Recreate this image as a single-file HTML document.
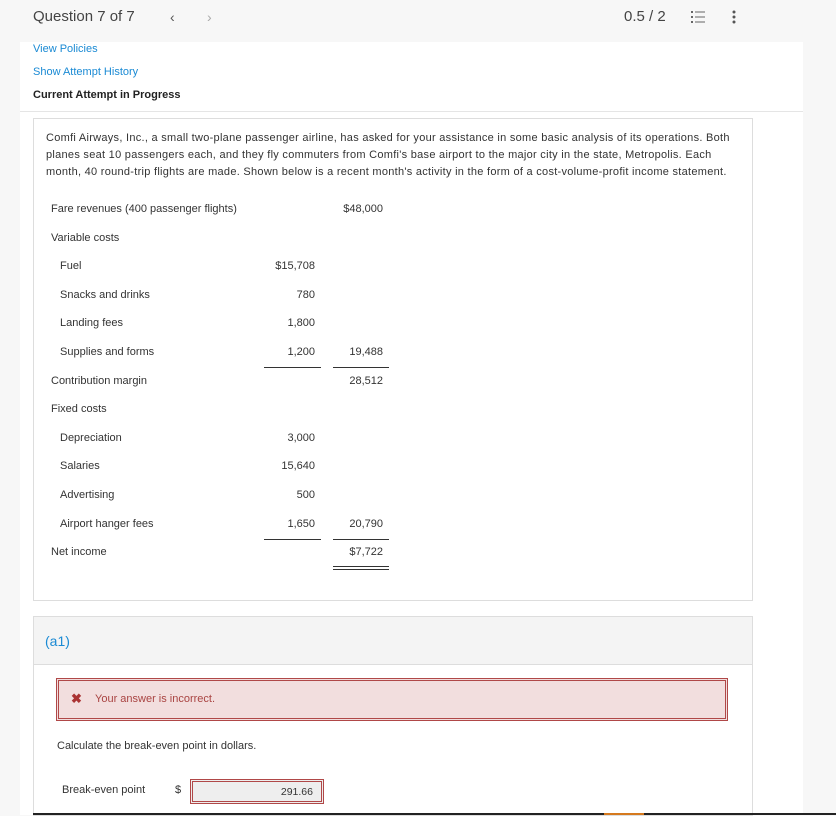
<!DOCTYPE html>
<html><head><meta charset="utf-8"><style>
*{margin:0;padding:0;box-sizing:border-box}
body{width:836px;height:815px;background:#f7f7f7;font-family:"Liberation Sans",sans-serif;color:#333;position:relative;overflow:hidden;font-size:11px}
.a{position:absolute;white-space:nowrap}
.r{text-align:right}
.col{position:absolute;left:20px;top:42px;width:783px;height:773px;background:#fff}
.hl{position:absolute;height:1px;background:#333}
</style></head><body>
<div class="a" style="left:33px;top:8px;font-size:15px;color:#444">Question 7 of 7</div>
<div class="a" style="left:170px;top:9px;font-size:14px;color:#555">&lsaquo;</div>
<div class="a" style="left:207px;top:9px;font-size:14px;color:#aaa">&rsaquo;</div>
<div class="a" style="left:624px;top:8px;font-size:15px;color:#444">0.5 / 2</div>
<svg class="a" style="left:691px;top:11px" width="14" height="12" viewBox="0 0 14 12"><g fill="#666"><rect x="0" y="0" width="2" height="2"/><rect x="0" y="5" width="2" height="2"/><rect x="0" y="10" width="2" height="2"/><rect x="4" y="0.5" width="10" height="1"/><rect x="4" y="5.5" width="10" height="1"/><rect x="4" y="10.5" width="10" height="1"/></g></svg>
<svg class="a" style="left:732px;top:10px" width="4" height="14"><circle cx="2" cy="2" r="1.5" fill="#555"/><circle cx="2" cy="7" r="1.5" fill="#555"/><circle cx="2" cy="12" r="1.5" fill="#555"/></svg>
<div class="col"></div>
<div class="a" style="left:33px;top:43px;color:#1a8ad4">View Policies</div>
<div class="a" style="left:33px;top:66px;color:#1a8ad4">Show Attempt History</div>
<div class="a" style="left:33px;top:89px;color:#222;font-weight:bold;font-size:11px">Current Attempt in Progress</div>
<div class="a" style="left:20px;top:111px;width:783px;height:1px;background:#e5e5e5"></div>
<div class="a" style="left:33px;top:118px;width:720px;height:483px;border:1px solid #ddd;background:#fff"></div>
<div class="a" style="left:46px;top:130px;font-size:11px;line-height:17px;color:#333;letter-spacing:0.28px">Comfi Airways, Inc., a small two-plane passenger airline, has asked for your assistance in some basic analysis of its operations. Both<br>planes seat 10 passengers each, and they fly commuters from Comfi's base airport to the major city in the state, Metropolis. Each<br>month, 40 round-trip flights are made. Shown below is a recent month's activity in the form of a cost-volume-profit income statement.</div>
<div style="font-size:11px">
<div class="a" style="left:51px;top:203px">Fare revenues (400 passenger flights)</div><div class="a r" style="left:320px;width:63px;top:203px">$48,000</div>
<div class="a" style="left:51px;top:232px">Variable costs</div>
<div class="a" style="left:60px;top:260px">Fuel</div><div class="a r" style="left:250px;width:65px;top:260px">$15,708</div>
<div class="a" style="left:60px;top:289px">Snacks and drinks</div><div class="a r" style="left:250px;width:65px;top:289px">780</div>
<div class="a" style="left:60px;top:317px">Landing fees</div><div class="a r" style="left:250px;width:65px;top:317px">1,800</div>
<div class="a" style="left:60px;top:346px">Supplies and forms</div><div class="a r" style="left:250px;width:65px;top:346px">1,200</div><div class="a r" style="left:320px;width:63px;top:346px">19,488</div>
<div class="a" style="left:51px;top:375px">Contribution margin</div><div class="a r" style="left:320px;width:63px;top:375px">28,512</div>
<div class="a" style="left:51px;top:403px">Fixed costs</div>
<div class="a" style="left:60px;top:432px">Depreciation</div><div class="a r" style="left:250px;width:65px;top:432px">3,000</div>
<div class="a" style="left:60px;top:460px">Salaries</div><div class="a r" style="left:250px;width:65px;top:460px">15,640</div>
<div class="a" style="left:60px;top:489px">Advertising</div><div class="a r" style="left:250px;width:65px;top:489px">500</div>
<div class="a" style="left:60px;top:518px">Airport hanger fees</div><div class="a r" style="left:250px;width:65px;top:518px">1,650</div><div class="a r" style="left:320px;width:63px;top:518px">20,790</div>
<div class="a" style="left:51px;top:546px">Net income</div><div class="a r" style="left:320px;width:63px;top:546px">$7,722</div>
</div>
<div class="hl" style="left:264px;top:367px;width:57px"></div><div class="hl" style="left:333px;top:367px;width:56px"></div>
<div class="hl" style="left:264px;top:539px;width:57px"></div><div class="hl" style="left:333px;top:539px;width:56px"></div>
<div class="hl" style="left:333px;top:566px;width:56px"></div><div class="hl" style="left:333px;top:569px;width:56px"></div>
<div class="a" style="left:33px;top:616px;width:720px;height:200px;border:1px solid #ddd;background:#fff"></div>
<div class="a" style="left:34px;top:617px;width:718px;height:48px;background:#f4f4f4;border-bottom:1px solid #ddd"></div>
<div class="a" style="left:45px;top:633px;font-size:14px;color:#1a8ad4">(a1)</div>
<div class="a" style="left:56px;top:678px;width:672px;height:43px;border:1px solid #b04848;background:#f2dede"><div style="position:absolute;inset:1px;border:1px solid #b04848"></div></div>
<div class="a" style="left:71px;top:691px;font-size:13px;color:#a33;font-weight:bold">&#10006;</div>
<div class="a" style="left:95px;top:693px;font-size:11px;color:#a94442">Your answer is incorrect.</div>
<div class="a" style="left:57px;top:740px;font-size:11px">Calculate the break-even point in dollars.</div>
<div class="a" style="left:62px;top:784px;font-size:11px">Break-even point</div>
<div class="a" style="left:175px;top:784px;font-size:11px">$</div>
<div class="a" style="left:190px;top:779px;width:134px;height:25px;border:1px solid #b04848;background:#eee"><div style="position:absolute;inset:1px;border:1px solid #b04848"></div><div class="a r" style="right:10px;top:6px;font-size:10.5px">291.66</div></div>
<div class="a" style="left:33px;top:813px;width:803px;height:2px;background:#222"></div>
<div class="a" style="left:604px;top:813px;width:40px;height:2px;background:#d5791e"></div>
</body></html>
